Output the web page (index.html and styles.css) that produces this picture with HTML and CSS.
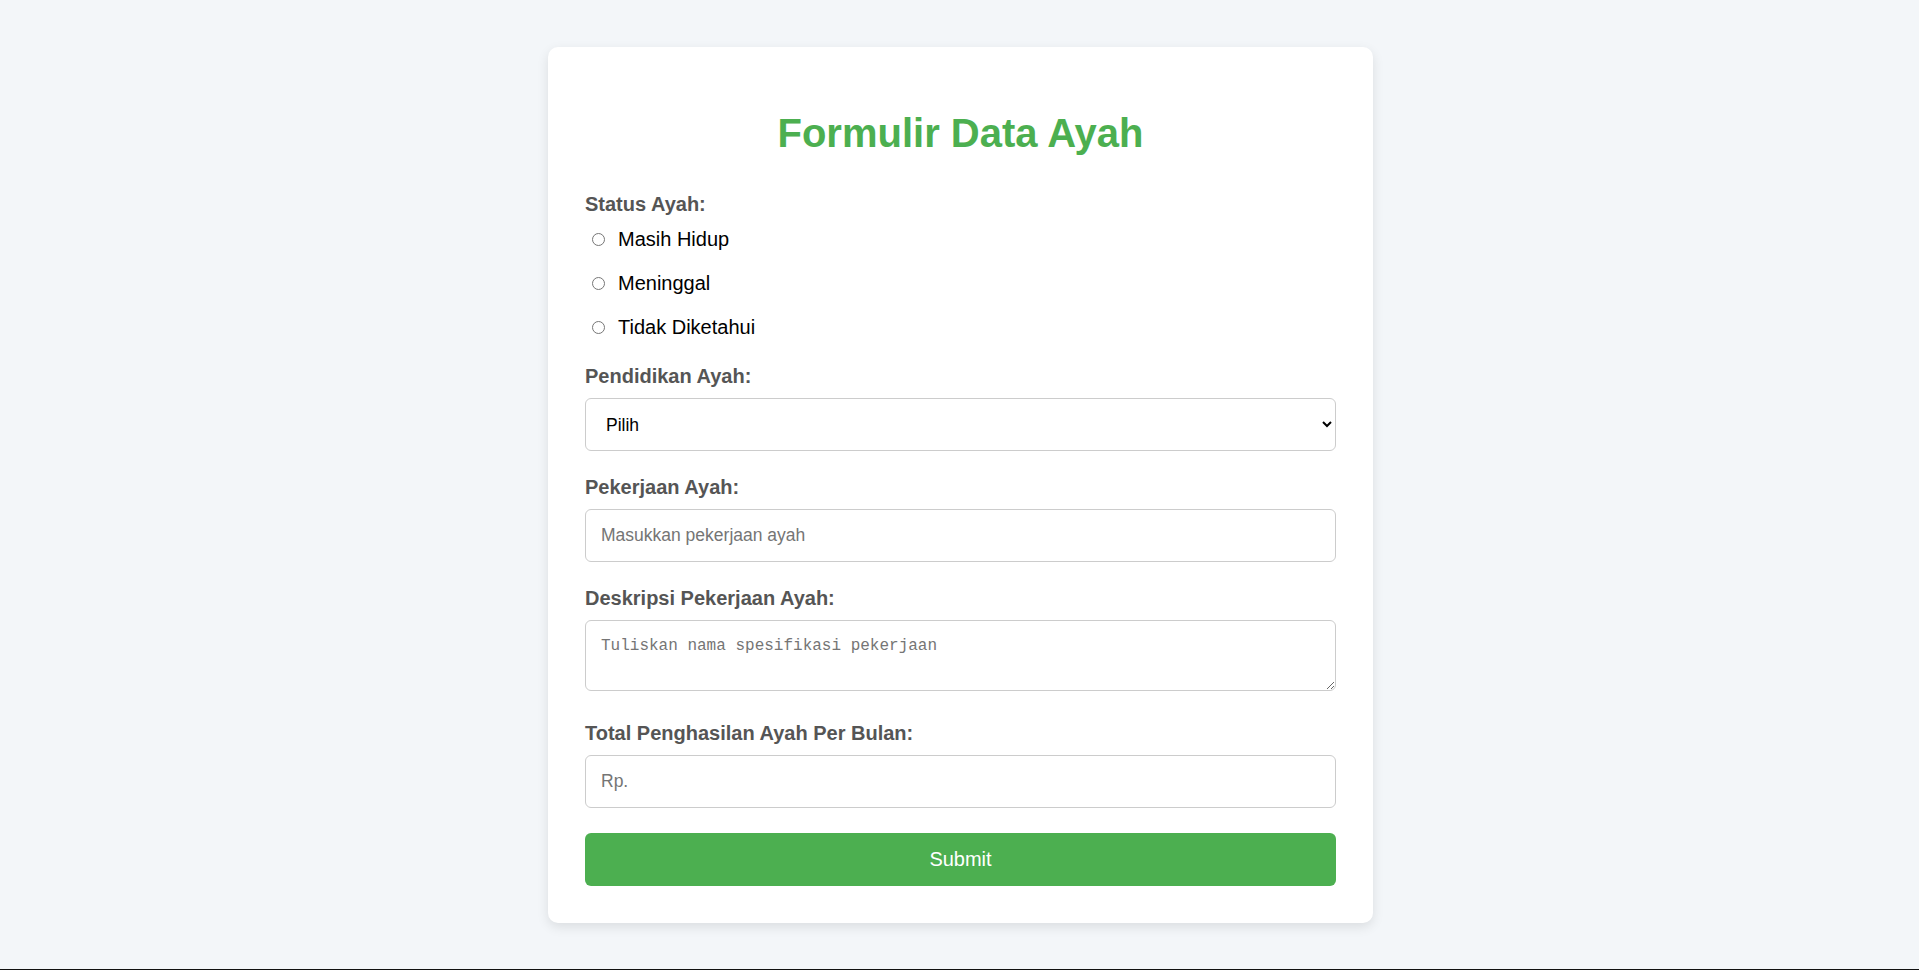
FILE: index.html
```
<!DOCTYPE html>
<html lang="id">
<head>
<meta charset="utf-8">
<title>Formulir Data Ayah</title>
<link rel="stylesheet" href="styles.css">
</head>
<body>
<div class="card">
  <h1 class="title">Formulir Data Ayah</h1>
  <form class="form">
    <label class="field-label">Status Ayah:</label>
    <div class="radio-group">
      <label class="radio-row"><input type="radio" name="status" class="radio"><span>Masih Hidup</span></label>
      <label class="radio-row"><input type="radio" name="status" class="radio"><span>Meninggal</span></label>
      <label class="radio-row"><input type="radio" name="status" class="radio"><span>Tidak Diketahui</span></label>
    </div>

    <label class="field-label" for="pendidikan">Pendidikan Ayah:</label>
    <select id="pendidikan" class="control select">
      <option>Pilih</option>
      <option>SD</option>
      <option>SMP</option>
      <option>SMA</option>
      <option>S1</option>
    </select>

    <label class="field-label" for="pekerjaan">Pekerjaan Ayah:</label>
    <input id="pekerjaan" class="control" type="text" placeholder="Masukkan pekerjaan ayah">

    <label class="field-label" for="deskripsi">Deskripsi Pekerjaan Ayah:</label>
    <textarea id="deskripsi" class="control textarea" placeholder="Tuliskan nama spesifikasi pekerjaan"></textarea>

    <label class="field-label" for="penghasilan">Total Penghasilan Ayah Per Bulan:</label>
    <input id="penghasilan" class="control" type="text" placeholder="Rp.">

    <button type="button" class="submit">Submit</button>
  </form>
</div>
</body>
</html>
```
FILE: styles.css
```
html {
  background: #f3f6f9;
}
body {
  margin: 0;
  padding: 47px 0 46px 2px;
  min-height: 970px;
  box-sizing: border-box;
  border-bottom: 1px solid #111;
  background: #f3f6f9;
  font-family: "Liberation Sans", Arial, sans-serif;
  font-size: 20px;
}
.card {
  width: 825px;
  box-sizing: border-box;
  margin: 0 auto;
  padding: 37px;
  background: #fff;
  border-radius: 10px;
  box-shadow: 0 4px 12px rgba(0, 0, 0, 0.1);
}
.title {
  margin: 26px 0 37px;
  font-size: 40px;
  line-height: 46px;
  font-weight: bold;
  text-align: center;
  color: #4caf50;
}
.form {
  display: flex;
  flex-direction: column;
}
.field-label {
  display: block;
  font-weight: bold;
  color: #555;
  font-size: 20px;
  line-height: 23px;
  margin-bottom: 10px;
}
.radio-group {
  display: flex;
  flex-direction: column;
  gap: 21px;
  margin-top: 2px;
  margin-bottom: 26px;
}
.radio-row {
  display: flex;
  align-items: center;
  height: 23px;
  line-height: 23px;
  color: #000;
  font-size: 20px;
}
.radio {
  width: 13px;
  height: 13px;
  margin: 0 13px 0 7px;
}
.control {
  display: block;
  width: 100%;
  box-sizing: border-box;
  height: 53px;
  margin: 0 0 25px;
  padding: 0 15px;
  border: 1px solid #ccc;
  border-radius: 6px;
  background: #fff;
  font-family: "Liberation Sans", Arial, sans-serif;
  font-size: 17.5px;
  color: #000;
}
.control::placeholder {
  color: #757575;
}
.select {
  padding-left: 16px;
}
.textarea {
  height: 71px;
  padding: 15px;
  margin-bottom: 31px;
  font-family: "Liberation Mono", "DejaVu Sans Mono", monospace;
  font-size: 16px;
  line-height: 20px;
  resize: vertical;
}
.submit {
  display: block;
  width: 100%;
  height: 53px;
  border: none;
  border-radius: 6px;
  background: #4caf50;
  color: #fff;
  font-family: "Liberation Sans", Arial, sans-serif;
  font-size: 20px;
  cursor: pointer;
}
```
